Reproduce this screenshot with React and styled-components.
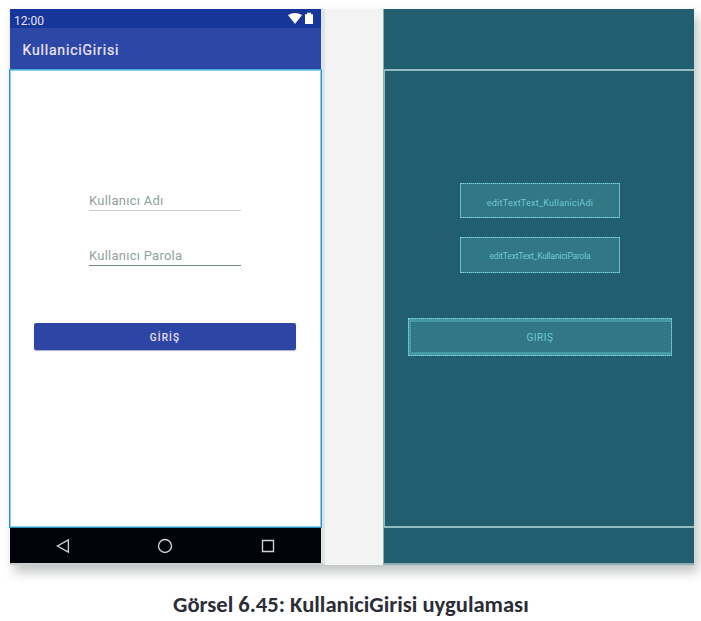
import React from "react";
import styled, { createGlobalStyle } from "styled-components";

const GlobalStyle = createGlobalStyle`
  * { box-sizing: border-box; }
  body { margin: 0; background: #fff; overflow: hidden; }
`;

const Page = styled.main`
  width: 701px;
  height: 621px;
  padding: 9px 7px 0 10px;
  font-family: Roboto, sans-serif;
`;

const Figure = styled.section`
  display: flex;
  width: 684px;
  height: 556px;
  background: #f3f3f3;
  box-shadow: 4px 7px 11px rgba(45, 50, 52, 0.3);
`;

const Phone = styled.div`
  display: flex;
  flex-direction: column;
  width: 315px;
  height: 556px;
  border-right: 4px solid #dce4e5;
  border-bottom: 2px solid #c9cecf;
`;

const StatusBar = styled.header`
  display: flex;
  justify-content: space-between;
  height: 19px;
  padding: 3px 7px 0 4px;
  background: #17369a;
  color: #e9e3f5;
  font-size: 12px;
  line-height: 18px;
`;

const StatusIcons = styled.svg`
  display: block;
  width: 28px;
  height: 14px;
`;

const AppBar = styled.div`
  height: 41px;
  padding: 12px 12.5px 0;
  background: #2d47a6;
  color: #f3e9f8;
  font-size: 14px;
  font-weight: 400;
  line-height: 20px;
  letter-spacing: 0.82px;
  -webkit-text-stroke: 0.2px #f3e9f8;
`;

const Screen = styled.div`
  width: 313px;
  height: 459px;
  margin-left: -1px;
  padding: 118px 24px 0;
  border: 1px solid #2c93c8;
  border-top-color: #45acdf;
  box-shadow: inset 0 0 0 1px #91cde6;
  background: #fff;
`;

const Field = styled.div`
  width: 152px;
  height: 22px;
  margin: ${(p) => p.$top} 0 0 55px;
  border-bottom: 1px solid ${(p) => p.$line};
  color: #91a09e;
  font-size: 13px;
  line-height: 23px;
  letter-spacing: 0.25px;
  white-space: nowrap;
`;

const LoginButton = styled.button`
  display: block;
  width: 262px;
  height: 27px;
  margin: 57px 0 0;
  padding: 1px 0 0;
  border: 0;
  border-radius: 2px;
  background: #2d46a5;
  box-shadow: 0 1px 1px #aaa9c6;
  color: #eee0f5;
  font: 500 10px Roboto, sans-serif;
  letter-spacing: 1.1px;
`;

const NavBar = styled.nav`
  display: flex;
  justify-content: space-between;
  align-items: center;
  height: 35px;
  padding: 0 45.5px 0 45px;
  background: #020308;
`;

const NavIcon = styled.svg`
  width: 16px;
  height: 16px;
  fill: none;
  stroke: #d0d4d5;
  stroke-width: 1.35;
`;

const Blueprint = styled.div`
  display: flex;
  flex-direction: column;
  width: 311px;
  margin-left: auto;
  border-left: 1px solid #8eafb3;
  border-bottom: 2px solid #8eaeb3;
  background: #215e70;
`;

const BlueprintScreen = styled.div`
  height: 459px;
  margin-top: 60px;
  padding: 112px 22px 0 23px;
  border: solid #94bcc0;
  border-width: 2px 0 2px 1px;
`;

const Widget = styled.div`
  display: flex;
  align-items: center;
  justify-content: center;
  width: 160px;
  height: ${(p) => p.$height};
  margin: 0 0 19px 52px;
  padding: ${(p) => p.$drop} 0 0;
  border: 1px solid #53a6b3;
  outline: 1px dotted #7fd4de;
  outline-offset: -1px;
  background: #317786;
  color: #70c8d2;
  font-size: ${(p) => p.$size};
  letter-spacing: ${(p) => p.$spacing};
  white-space: nowrap;
`;

const ButtonWidget = styled(Widget)`
  width: 264px;
  margin: 45px 0 0;
  box-shadow: inset 0 3px #4698a5, inset 0 -3px #4698a5, inset 2px 0 #4698a5;
`;

const Caption = styled.p`
  margin: 23px 0 0 163px;
  color: #2b2d37;
  font: 700 22.6px/32px Carlito, "Open Sans", sans-serif;
  white-space: nowrap;
`;

export default function App() {
  return (
    <Page>
      <GlobalStyle />
      <Figure>
        <Phone>
          <StatusBar>
            <span>12:00</span>
            <StatusIcons viewBox="0 0 28 14" fill="#fff">
              <path d="M2 3Q9-1 16 3L9 12Z" />
              <path d="M19 2.3h2V.8h4v1.5h2V12h-8Z" />
            </StatusIcons>
          </StatusBar>
          <AppBar>KullaniciGirisi</AppBar>
          <Screen>
            <Field $top="1px" $line="#c9cdcc">Kullanıcı Adı</Field>
            <Field $top="33px" $line="#718984">Kullanıcı Parola</Field>
            <LoginButton>GİRİŞ</LoginButton>
          </Screen>
          <NavBar>
            <NavIcon viewBox="0 0 16 16"><path d="M13.4 1.8v12.4L2.4 8Z" /></NavIcon>
            <NavIcon viewBox="0 0 16 16"><circle cx="8" cy="8" r="6.5" /></NavIcon>
            <NavIcon viewBox="0 0 16 16"><path d="M2.5 2.5h11v11h-11Z" /></NavIcon>
          </NavBar>
        </Phone>
        <Blueprint>
          <BlueprintScreen>
            <Widget $height="35px" $drop="4px" $size="9px" $spacing="0.25px">editTextText_KullaniciAdi</Widget>
            <Widget $height="36px" $drop="2px" $size="8.5px" $spacing="-0.2px">editTextText_KullaniciParola</Widget>
            <ButtonWidget $height="38px" $drop="1px" $size="10px" $spacing="0.5px">GIRIŞ</ButtonWidget>
          </BlueprintScreen>
        </Blueprint>
      </Figure>
      <Caption>Görsel 6.45: KullaniciGirisi uygulaması</Caption>
    </Page>
  );
}
